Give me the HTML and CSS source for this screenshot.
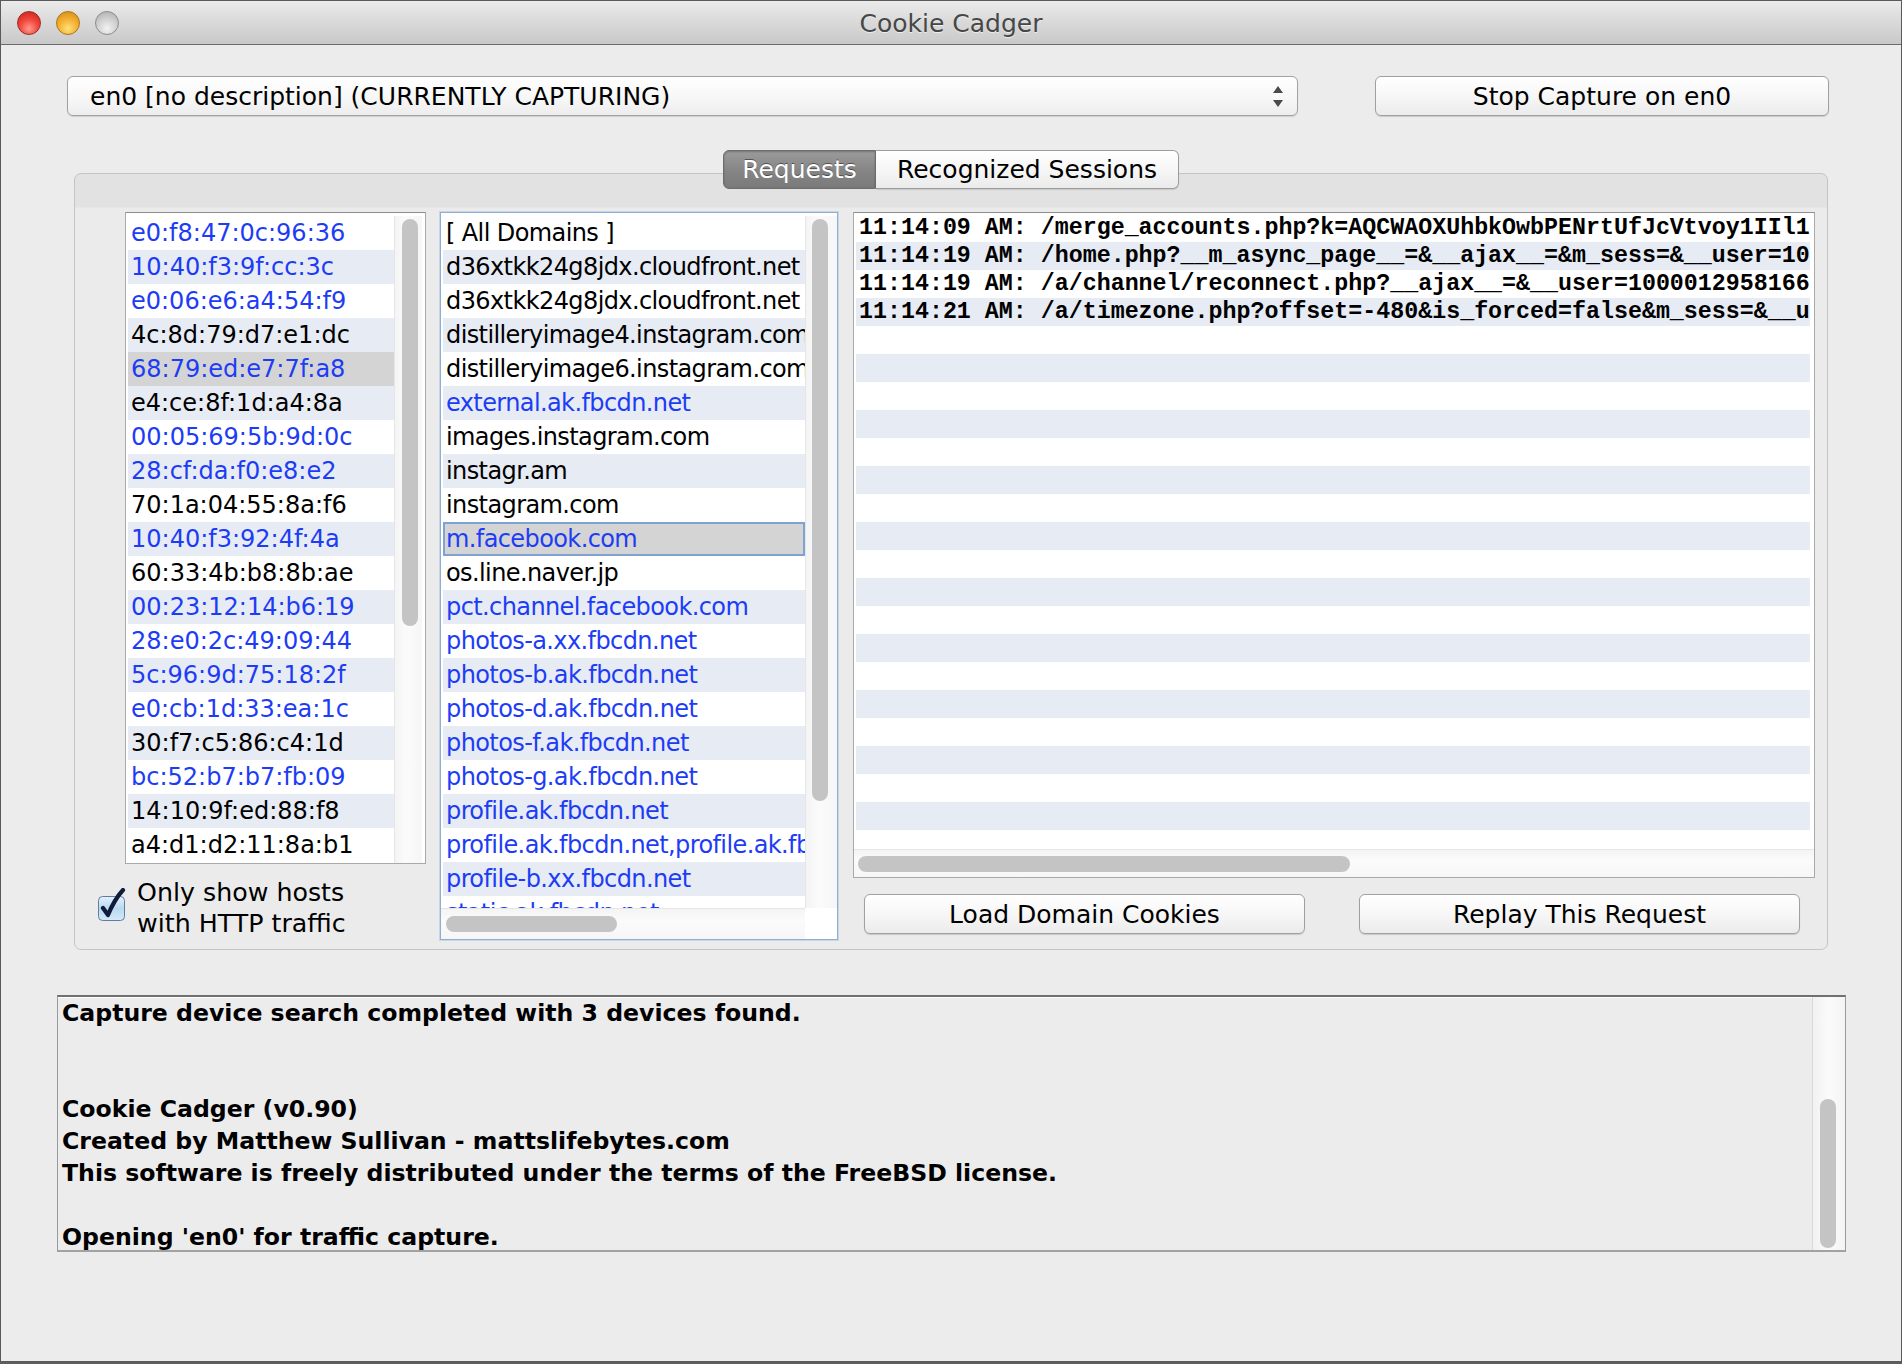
FILE: index.html
```html
<!DOCTYPE html>
<html>
<head>
<meta charset="utf-8">
<title>Cookie Cadger</title>
<link rel="stylesheet" href="styles.css">
</head>
<body>
<div class="window">
  <div class="titlebar">
    <div class="lights">
      <span class="light red"></span>
      <span class="light yellow"></span>
      <span class="light gray"></span>
    </div>
    <div class="title">Cookie Cadger</div>
    <div></div>
  </div>
  <div class="content">
    <div class="toprow">
      <div class="combo">
        <span class="combo-text">en0 [no description] (CURRENTLY CAPTURING)</span>
        <svg class="combo-arrows" width="12" height="22" viewBox="0 0 12 22"><path d="M6 0 L11 7 L1 7 Z" fill="#4a4a4a"/><path d="M1 14 L11 14 L6 21 Z" fill="#4a4a4a"/></svg>
      </div>
      <div class="btn stop">Stop Capture on en0</div>
    </div>

    <div class="tabs">
      <div class="tab tab-sel">Requests</div>
      <div class="tab tab-off">Recognized Sessions</div>
    </div>

    <div class="panel">
      <div class="col1">
        <div class="hostlist">
          <div class="rows">
            <div class="row b">e0:f8:47:0c:96:36</div>
            <div class="row alt b">10:40:f3:9f:cc:3c</div>
            <div class="row b">e0:06:e6:a4:54:f9</div>
            <div class="row alt">4c:8d:79:d7:e1:dc</div>
            <div class="row sel b">68:79:ed:e7:7f:a8</div>
            <div class="row alt">e4:ce:8f:1d:a4:8a</div>
            <div class="row b">00:05:69:5b:9d:0c</div>
            <div class="row alt b">28:cf:da:f0:e8:e2</div>
            <div class="row">70:1a:04:55:8a:f6</div>
            <div class="row alt b">10:40:f3:92:4f:4a</div>
            <div class="row">60:33:4b:b8:8b:ae</div>
            <div class="row alt b">00:23:12:14:b6:19</div>
            <div class="row b">28:e0:2c:49:09:44</div>
            <div class="row alt b">5c:96:9d:75:18:2f</div>
            <div class="row b">e0:cb:1d:33:ea:1c</div>
            <div class="row alt">30:f7:c5:86:c4:1d</div>
            <div class="row b">bc:52:b7:b7:fb:09</div>
            <div class="row alt">14:10:9f:ed:88:f8</div>
            <div class="row">a4:d1:d2:11:8a:b1</div>
          </div>
          <div class="vtrack"><div class="vthumb host-thumb"></div></div>
        </div>
        <div class="check">
          <svg class="checkbox" width="32" height="34" viewBox="0 0 32 34">
            <defs>
              <linearGradient id="cbg" x1="0" y1="0" x2="0" y2="1">
                <stop offset="0" stop-color="#e4f1fb"/>
                <stop offset="0.5" stop-color="#b9d9f2"/>
                <stop offset="1" stop-color="#d5e9f8"/>
              </linearGradient>
            </defs>
            <rect x="1.5" y="8.5" width="26" height="24" rx="4" ry="4" fill="url(#cbg)" stroke="#5f7f9f" stroke-width="1"/>
            <path d="M6 20 L11 27 Q17 12 26 2" fill="none" stroke="#0f1d3a" stroke-width="4.2" stroke-linecap="round" stroke-linejoin="round"/>
          </svg>
          <div class="check-text">Only show hosts<br>with HTTP traffic</div>
        </div>
      </div>

      <div class="domlist">
        <div class="drows">
          <div class="row">[ All Domains ]</div>
          <div class="row alt">d36xtkk24g8jdx.cloudfront.net</div>
          <div class="row">d36xtkk24g8jdx.cloudfront.net</div>
          <div class="row alt">distilleryimage4.instagram.com</div>
          <div class="row">distilleryimage6.instagram.com</div>
          <div class="row alt b">external.ak.fbcdn.net</div>
          <div class="row">images.instagram.com</div>
          <div class="row alt">instagr.am</div>
          <div class="row">instagram.com</div>
          <div class="row dsel b">m.facebook.com</div>
          <div class="row">os.line.naver.jp</div>
          <div class="row alt b">pct.channel.facebook.com</div>
          <div class="row b">photos-a.xx.fbcdn.net</div>
          <div class="row alt b">photos-b.ak.fbcdn.net</div>
          <div class="row b">photos-d.ak.fbcdn.net</div>
          <div class="row alt b">photos-f.ak.fbcdn.net</div>
          <div class="row b">photos-g.ak.fbcdn.net</div>
          <div class="row alt b">profile.ak.fbcdn.net</div>
          <div class="row b">profile.ak.fbcdn.net,profile.ak.fbcdn.net</div>
          <div class="row alt b">profile-b.xx.fbcdn.net</div>
          <div class="row b">static.ak.fbcdn.net</div>
        </div>
        <div class="vtrack dvtrack"><div class="vthumb dom-thumb"></div></div>
        <div class="htrack dhtrack"><div class="hthumb dom-hthumb"></div></div>
        <div class="corner"></div>
      </div>

      <div class="col3">
        <div class="reqlist">
          <div class="rrows">
            <div class="rrow">11:14:09 AM: /merge_accounts.php?k=AQCWAOXUhbkOwbPENrtUfJcVtvoy1IIl1QxZ</div>
            <div class="rrow alt">11:14:19 AM: /home.php?__m_async_page__=&amp;__ajax__=&amp;m_sess=&amp;__user=1000012958166</div>
            <div class="rrow">11:14:19 AM: /a/channel/reconnect.php?__ajax__=&amp;__user=1000012958166</div>
            <div class="rrow alt">11:14:21 AM: /a/timezone.php?offset=-480&amp;is_forced=false&amp;m_sess=&amp;__user=1000012958166</div>
            <div class="rrow"></div><div class="rrow alt"></div>
            <div class="rrow"></div><div class="rrow alt"></div>
            <div class="rrow"></div><div class="rrow alt"></div>
            <div class="rrow"></div><div class="rrow alt"></div>
            <div class="rrow"></div><div class="rrow alt"></div>
            <div class="rrow"></div><div class="rrow alt"></div>
            <div class="rrow"></div><div class="rrow alt"></div>
            <div class="rrow"></div><div class="rrow alt"></div>
            <div class="rrow"></div><div class="rrow alt"></div>
            <div class="rrow"></div>
          </div>
          <div class="htrack rhtrack"><div class="hthumb req-hthumb"></div></div>
        </div>
        <div class="btnrow">
          <div class="btn action">Load Domain Cookies</div>
          <div class="btn action">Replay This Request</div>
        </div>
      </div>
    </div>

    <div class="log">
      <div class="log-text">
        <div class="lline">Capture device search completed with 3 devices found.</div>
        <div class="lline">&nbsp;</div>
        <div class="lline">&nbsp;</div>
        <div class="lline">Cookie Cadger (v0.90)</div>
        <div class="lline">Created by Matthew Sullivan - mattslifebytes.com</div>
        <div class="lline">This software is freely distributed under the terms of the FreeBSD license.</div>
        <div class="lline">&nbsp;</div>
        <div class="lline">Opening 'en0' for traffic capture.</div>
      </div>
      <div class="log-track"><div class="vthumb log-thumb"></div></div>
    </div>
  </div>
</div>
</body>
</html>
```

FILE: styles.css
```css
html, body {
  margin: 0;
  padding: 0;
}
body {
  width: 1902px;
  height: 1364px;
  overflow: hidden;
  background: #5e5e5e;
  font-family: "DejaVu Sans", "Liberation Sans", sans-serif;
  color: #000;
}
.window {
  width: 1900px;
  height: 1360px;
  border: 1px solid #5a5a5a;
  background: #ececec;
  display: flex;
  flex-direction: column;
}

/* title bar */
.titlebar {
  height: 43px;
  border-bottom: 1px solid #6b6b6b;
  background: linear-gradient(#ebebeb, #d9d9d9 50%, #c9c9c9);
  display: grid;
  grid-template-columns: 1fr auto 1fr;
  align-items: center;
}
.lights {
  display: flex;
  gap: 15px;
  padding-left: 16px;
  padding-top: 1px;
}
.light {
  width: 24px;
  height: 24px;
  border-radius: 50%;
  box-sizing: border-box;
}
.light.red {
  background: radial-gradient(circle at 50% 75%, #ff9a8c 0, #f2483d 45%, #c41e16 100%);
  border: 1px solid #9c2a23;
}
.light.yellow {
  background: radial-gradient(circle at 50% 75%, #ffe07a 0, #f5b233 45%, #cf8a10 100%);
  border: 1px solid #a8741a;
}
.light.gray {
  background: radial-gradient(circle at 50% 75%, #f2f2f2 0, #d0d0d0 50%, #a9a9a9 100%);
  border: 1px solid #8c8c8c;
}
.title {
  font-size: 25px;
  color: #474747;
  text-shadow: 0 1px 0 rgba(255,255,255,0.6);
  padding-top: 1px;
}

/* content */
.content {
  padding-top: 31px;
  display: flex;
  flex-direction: column;
}
.toprow {
  display: flex;
  padding-left: 66px;
  gap: 77px;
}
.combo {
  width: 1231px;
  height: 40px;
  box-sizing: border-box;
  border: 1px solid #a2a2a2;
  border-radius: 6px;
  background: linear-gradient(#ffffff, #f6f6f6 60%, #ededed);
  box-shadow: 0 1px 1px rgba(0,0,0,0.12);
  display: flex;
  align-items: center;
  justify-content: space-between;
  padding: 0 13px 0 22px;
}
.combo-text {
  font-size: 25px;
}
.combo-arrows {
  display: block;
  margin-top: 2px;
}
.btn {
  height: 40px;
  box-sizing: border-box;
  border: 1px solid #a0a0a0;
  border-radius: 6px;
  background: linear-gradient(#ffffff, #f7f7f7 50%, #ebebeb);
  box-shadow: 0 1px 1px rgba(0,0,0,0.15);
  display: flex;
  align-items: center;
  justify-content: center;
  font-size: 25px;
}
.btn.stop {
  width: 454px;
}

/* tabs */
.tabs {
  margin-top: 34px;
  display: flex;
  justify-content: center;
  position: relative;
  z-index: 2;
}
.tab {
  height: 39px;
  box-sizing: border-box;
  display: flex;
  align-items: center;
  justify-content: center;
  font-size: 25px;
}
.tab-sel {
  width: 153px;
  border: 1px solid #6d6d6d;
  border-radius: 6px 0 0 6px;
  background: linear-gradient(#9c9c9c, #868686 50%, #7a7a7a);
  color: #fff;
  text-shadow: 0 -1px 0 rgba(0,0,0,0.45);
  box-shadow: inset 0 1px 2px rgba(0,0,0,0.25);
}
.tab-off {
  width: 303px;
  border: 1px solid #9c9c9c;
  border-left: none;
  border-radius: 0 6px 6px 0;
  background: linear-gradient(#ffffff, #f6f6f6 50%, #ebebeb);
  box-shadow: 0 1px 1px rgba(0,0,0,0.12);
}

/* tab panel */
.panel {
  margin: -16px 73px 0 73px;
  height: 777px;
  box-sizing: border-box;
  border: 1px solid #c4c4c4;
  border-radius: 7px;
  background: linear-gradient(#e2e2e2 0, #e2e2e2 33px, #ebebeb 34px);
  display: flex;
  padding: 38px 12px 9px 22px;
  position: relative;
  z-index: 1;
}
.col1 {
  width: 329px;
  display: flex;
  flex-direction: column;
}
.row {
  height: 34px;
  line-height: 34px;
  font-size: 24px;
  padding-left: 3px;
  white-space: nowrap;
  overflow: hidden;
  box-sizing: border-box;
}
.row.alt { background: #e6ebf4; }
.row.b { color: #1d3cf5; }
.row.sel { background: #d4d4d4; }
.row.dsel {
  background: #d4d4d4;
  border: 2px solid #7ea3d3;
  line-height: 30px;
  padding-left: 1px;
}

.hostlist {
  margin-left: 28px;
  width: 301px;
  height: 652px;
  box-sizing: border-box;
  border: 1px solid #a9a9a9;
  border-top-color: #8e8e8e;
  background: #fff;
  display: flex;
  padding: 3px 3px 0 2px;
}
.hostlist .rows {
  width: 266px;
}
.vtrack {
  flex: 1;
  background: linear-gradient(90deg, #f4f4f4, #fbfbfb 40%, #f6f6f6);
  border-left: 1px solid #e6e6e6;
}
.vthumb {
  width: 16px;
  border-radius: 8px;
  background: #c4c4c4;
}
.host-thumb {
  margin: 3px 0 0 7px;
  height: 407px;
}
.check {
  margin-top: 13px;
  display: flex;
  align-items: center;
  gap: 8px;
}
.checkbox {
  display: block;
  margin-top: -6px;
}
.check-text {
  font-size: 25.3px;
  line-height: 31px;
}

/* domain list */
.domlist {
  margin-left: 14px;
  width: 398px;
  height: 728px;
  box-sizing: border-box;
  border: 1px solid #8eaed6;
  box-shadow: 0 0 0 1px rgba(142,174,214,0.35);
  background: #fff;
  display: grid;
  grid-template-columns: 364px 1fr;
  grid-template-rows: 692px 1fr;
  padding: 3px 0 0 0;
}
.drows {
  padding-left: 2px;
  overflow: hidden;
}
.drows .row {
  letter-spacing: -0.6px;
}
.dom-thumb {
  margin: 3px 0 0 6px;
  height: 582px;
}
.htrack {
  background: linear-gradient(#f4f4f4, #fbfbfb 40%, #f6f6f6);
  border-top: 1px solid #e6e6e6;
}
.hthumb {
  height: 16px;
  border-radius: 8px;
  background: #c4c4c4;
}
.dom-hthumb {
  margin: 7px 0 0 5px;
  width: 171px;
}
.corner {
  background: #fff;
}

/* requests */
.col3 {
  margin-left: 15px;
  width: 962px;
  display: flex;
  flex-direction: column;
}
.reqlist {
  height: 666px;
  box-sizing: border-box;
  border: 1px solid #a9a9a9;
  border-top-color: #8e8e8e;
  background: #fff;
  display: flex;
  flex-direction: column;
}
.rrows {
  height: 635px;
  overflow: hidden;
  padding: 1px 4px 0 2px;
}
.rrow {
  height: 28px;
  line-height: 28px;
  font-family: "Liberation Mono", "Courier New", monospace;
  font-weight: bold;
  font-size: 23.3px;
  padding-left: 3px;
  white-space: pre;
  overflow: hidden;
}
.rrow.alt { background: #e6ebf4; }
.rhtrack {
  flex: 1;
}
.req-hthumb {
  margin: 6px 0 0 4px;
  width: 492px;
}
.btnrow {
  margin-top: 16px;
  display: flex;
  gap: 54px;
  padding-left: 11px;
}
.btn.action {
  width: 441px;
}

/* log */
.log {
  margin: 45px 55px 0 56px;
  height: 257px;
  box-sizing: border-box;
  border-top: 2px solid #707070;
  border-left: 1px solid #9a9a9a;
  border-right: 1px solid #9a9a9a;
  border-bottom: 2px solid #a2a2a2;
  box-shadow: inset 0 1px 0 #ffffff;
  display: flex;
}
.log-text {
  flex: 1;
  padding: 0 0 0 4px;
  font-weight: bold;
  font-size: 23.6px;
}
.lline {
  height: 32px;
  line-height: 32px;
  white-space: nowrap;
}
.log-track {
  width: 32px;
  border-left: 1px solid #dadada;
  background: linear-gradient(90deg, #f1f1f1, #fbfbfb 50%, #f4f4f4);
}
.log-thumb {
  margin: 102px 0 0 7px;
  height: 149px;
}
```
